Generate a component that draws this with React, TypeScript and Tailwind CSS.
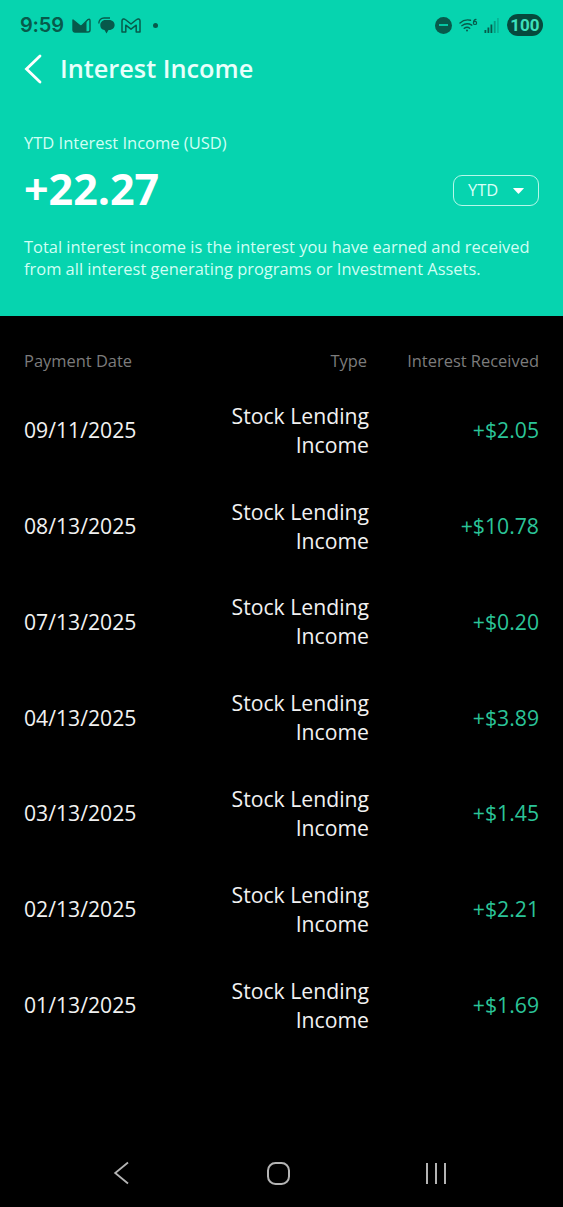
import React from 'react';

interface Payment {
    date: string;
    type: string;
    amount: string;
}

const payments: Payment[] = [
    { date: '09/11/2025', type: 'Stock Lending Income', amount: '+$2.05' },
    { date: '08/13/2025', type: 'Stock Lending Income', amount: '+$10.78' },
    { date: '07/13/2025', type: 'Stock Lending Income', amount: '+$0.20' },
    { date: '04/13/2025', type: 'Stock Lending Income', amount: '+$3.89' },
    { date: '03/13/2025', type: 'Stock Lending Income', amount: '+$1.45' },
    { date: '02/13/2025', type: 'Stock Lending Income', amount: '+$2.21' },
    { date: '01/13/2025', type: 'Stock Lending Income', amount: '+$1.69' },
];

const StatusBar: React.FC = () => (
    <div className="flex h-[50px] items-center justify-between pl-5 pr-5 font-['Inter',sans-serif] text-[#075a4b]">
        <div className="flex items-center">
            <span className="w-[52px] text-[20px] font-semibold leading-none tracking-[-0.2px]">9:59</span>
            <svg className="h-[15px] w-[19px]" viewBox="0 0 19 15" fill="none">
                <path d="M1 2 9 8.5 14.5 3.5V14H3a2 2 0 0 1-2-2z" fill="currentColor" />
                <path d="M1 2 9 8.5 16 1.6q2-1 2 1.2V12a2 2 0 0 1-2 2H3a2 2 0 0 1-2-2z" stroke="currentColor" strokeWidth="1.4" strokeLinejoin="round" />
            </svg>
            <svg className="ml-[7px] h-[17px] w-[17px]" viewBox="0 0 17 17" fill="currentColor">
                <path d="M7.5 3H11c7.5 0 7.5 10 0 10h-.5L8.5 16.5 6.5 13C.5 12.5 1 3 7.5 3z" />
                <path d="M.8 6.5C.8 3 3 1 6 1h6" fill="none" stroke="currentColor" strokeWidth="1.3" />
            </svg>
            <svg className="ml-[6px] h-[15px] w-[20px]" viewBox="0 0 20 15" fill="none" stroke="currentColor" strokeWidth="1.5" strokeLinejoin="round">
                <path d="M1 14V2.8C1 .8 3 .4 4.300 1.500L10 6l5.700-4.500C17 .4 19 .8 19 2.800V14h-3.800V7.200L10 11.200 4.800 7.200V14z" />
            </svg>
            <span className="ml-[12px] size-[5px] rounded-full bg-current" />
        </div>
        <div className="flex items-center">
            <span className="flex size-[17px] items-center justify-center rounded-full bg-[#075a4b]">
                <span className="h-[2px] w-[9px] bg-[#06c4a2]" />
            </span>
            <svg className="ml-[7px] h-[15px] w-[19px]" viewBox="0 0 19 15" fill="none" stroke="currentColor" strokeWidth="1.4" strokeLinecap="round">
                <path d="M1 5Q5.5.8 11.5 2.3M2.800 7.700q4.800-3.500 10-.5M5.200 10.300q3-2 5.500 0" />
                <circle cx="8" cy="12.5" r="1" fill="currentColor" stroke="none" />
                <path d="M17 1.300q-2.200.2-2.500 3" strokeWidth="1.2" />
                <circle cx="16" cy="4.9" r="1.6" strokeWidth="1.2" />
            </svg>
            <svg className="ml-[6px] h-[17px] w-[16px]" viewBox="0 0 16 17" fill="currentColor">
                <rect x="0.5" y="13" width="1.8" height="3" />
                <rect x="3.5" y="10.5" width="1.8" height="5.5" />
                <rect x="6.5" y="7.5" width="1.8" height="8.5" />
                <rect x="9.8" y="4" width="1.8" height="12" opacity=".45" />
                <rect x="13" y="1" width="1.8" height="15" opacity=".25" />
            </svg>
            <span className="ml-[7px] flex h-[22px] w-[36px] items-center justify-center rounded-full bg-[#06493d] font-['Roboto',sans-serif] text-[17px] font-bold leading-none text-[#3de0bc]">100</span>
        </div>
    </div>
);

const NavBar: React.FC = () => (
    <nav className="flex h-[68px] items-center pl-[113px] text-[#b4b4b4]">
        <svg className="h-[24px] w-[16px]" viewBox="0 0 16 24" fill="none" stroke="currentColor" strokeWidth="1.8">
            <path d="M15 1.5 2.2 12 15 22.5" />
        </svg>
        <span className="ml-[138px] size-[23px] rounded-[8.5px] border-2 border-current" />
        <div className="ml-[136px] flex h-[21px] w-[20px] justify-between">
            <span className="w-[2px] bg-current" />
            <span className="w-[2px] bg-current" />
            <span className="w-[2px] bg-current" />
        </div>
    </nav>
);

const PaymentRow: React.FC<{ payment: Payment }> = ({ payment }) => (
    <div className="flex h-[95.8px] items-center text-[21.2px] leading-[29px]">
        <span className="w-[190px] text-[#f2f2f2]">{payment.date}</span>
        <span className="w-[155px] text-right text-[#f2f2f2]">{payment.type}</span>
        <span className="flex-1 text-right text-[#2bc498]">{payment.amount}</span>
    </div>
);

const App: React.FC = () => {
    return (
        <div className="flex h-[1207px] w-[563px] flex-col bg-black font-['Open_Sans',sans-serif]">
            <header className="h-[315.5px] bg-[#06d4af] text-white">
                <StatusBar />
                <div className="flex h-[38px] items-center pl-6">
                    <svg className="h-[30px] w-[18px]" viewBox="0 0 18 30" fill="none" stroke="currentColor" strokeWidth="2.8" strokeLinecap="round">
                        <path d="M16 2 2.5 15 16 28" />
                    </svg>
                    <h1 className="ml-[18px] text-[25.3px] font-semibold leading-none text-[#e8fffb]">Interest Income</h1>
                </div>
                <div className="px-6 pt-[43px]">
                    <p className="text-[16.5px] leading-6 text-[#d0fff4]">YTD Interest Income (USD)</p>
                    <div className="mt-[5px] flex h-[58px] items-center justify-between">
                        <span className="text-[43px] font-bold leading-[58px]">+22.27</span>
                        <button className="mt-[3px] flex h-[31px] w-[86px] items-center rounded-[9px] border border-[#b5f8e9] pl-[14px] text-[16.5px] text-[#d8fff7]">
                            YTD
                            <svg className="ml-[15px] h-[6px] w-[11px]" viewBox="0 0 11 6" fill="#fff">
                                <path d="M.5 0h10q.5 0 .2.5L6 5.600q-.5.500-1 0L.3.500Q0 0 .5 0z" />
                            </svg>
                        </button>
                    </div>
                    <p className="mt-[18px] w-[515px] text-[16.45px] leading-[22px] text-[#d0fff4]">
                        Total interest income is the interest you have earned and received from all interest generating programs or Investment Assets.
                    </p>
                </div>
            </header>
            <main className="flex-1 px-6 pt-[33.9px]">
                <div className="flex h-6 items-center text-[16.45px] text-[#7c7c7c]">
                    <span className="w-[190px]">Payment Date</span>
                    <span className="w-[153px] text-right">Type</span>
                    <span className="flex-1 text-right">Interest Received</span>
                </div>
                <div className="mt-[8.5px]">
                    {payments.map(payment => (
                        <PaymentRow key={payment.date} payment={payment} />
                    ))}
                </div>
            </main>
            <NavBar />
        </div>
    );
};

export default App;
